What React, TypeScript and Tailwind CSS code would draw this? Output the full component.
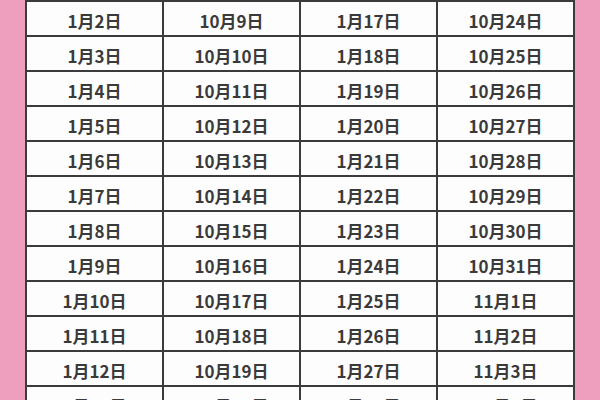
const rows = Array.from({ length: 12 }, (_, i) => {
  const k = i + 2;
  const d4 = k + 22;
  return [
    `1月${k}日`,
    `10月${k + 7}日`,
    `1月${k + 15}日`,
    d4 <= 31 ? `10月${d4}日` : `11月${d4 - 31}日`,
  ];
});

export default function App() {
  return (
    <div
      className="h-[400px] w-[600px] overflow-hidden bg-[#ef9fbe] px-[25px]"
      style={{ fontFamily: '"Noto Sans CJK SC", "Noto Sans", sans-serif' }}
    >
      <div className="grid grid-cols-4 gap-[2px] bg-[#3b3b3b] p-[2px]">
        {rows.flat().map((t, i) => (
          <div
            key={i}
            className="flex h-[33px] items-center justify-center bg-[#fdfdfd] pt-[5px] text-[17px] font-semibold text-[#3a3a3a]"
          >
            {t}
          </div>
        ))}
      </div>
    </div>
  );
}
